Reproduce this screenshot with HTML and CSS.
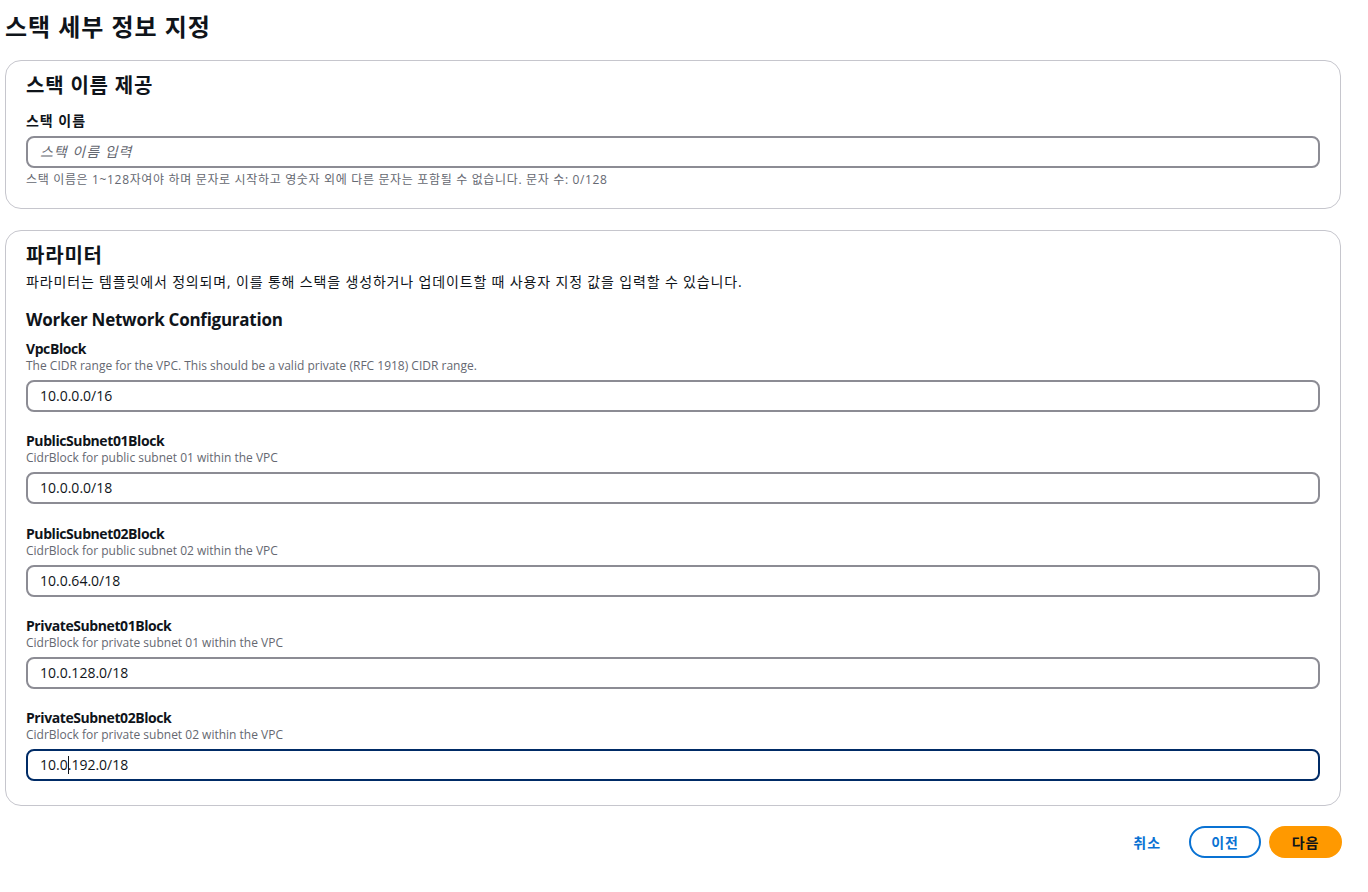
FILE: index.html
```html
<!DOCTYPE html>
<html lang="ko">
<head>
<meta charset="utf-8">
<title>스택 세부 정보 지정</title>
<link rel="stylesheet" href="styles.css">
</head>
<body>
<main class="page">
  <h1 class="page-title">스택 세부 정보 지정</h1>

  <section class="container">
    <h2 class="container-title">스택 이름 제공</h2>
    <div class="field">
      <label class="field-label ko">스택 이름</label>
      <div class="input empty">스택 이름 입력</div>
      <div class="field-hint">스택 이름은 1~128자여야 하며 문자로 시작하고 영숫자 외에 다른 문자는 포함될 수 없습니다. 문자 수: 0/128</div>
    </div>
  </section>

  <section class="container params">
    <h2 class="container-title">파라미터</h2>
    <p class="container-desc">파라미터는 템플릿에서 정의되며, 이를 통해 스택을 생성하거나 업데이트할 때 사용자 지정 값을 입력할 수 있습니다.</p>
    <h3 class="group-title">Worker Network Configuration</h3>

    <div class="param">
      <label class="field-label">VpcBlock</label>
      <div class="param-desc">The CIDR range for the VPC. This should be a valid private (RFC 1918) CIDR range.</div>
      <div class="input">10.0.0.0/16</div>
    </div>
    <div class="param">
      <label class="field-label">PublicSubnet01Block</label>
      <div class="param-desc">CidrBlock for public subnet 01 within the VPC</div>
      <div class="input">10.0.0.0/18</div>
    </div>
    <div class="param">
      <label class="field-label">PublicSubnet02Block</label>
      <div class="param-desc">CidrBlock for public subnet 02 within the VPC</div>
      <div class="input">10.0.64.0/18</div>
    </div>
    <div class="param">
      <label class="field-label">PrivateSubnet01Block</label>
      <div class="param-desc">CidrBlock for private subnet 01 within the VPC</div>
      <div class="input">10.0.128.0/18</div>
    </div>
    <div class="param">
      <label class="field-label">PrivateSubnet02Block</label>
      <div class="param-desc">CidrBlock for private subnet 02 within the VPC</div>
      <div class="input focused"><span class="caret-wrap">10.0<span class="caret"></span></span>.192.0/18</div>
    </div>
  </section>

  <div class="actions">
    <button class="btn-link">취소</button>
    <button class="btn-normal">이전</button>
    <button class="btn-primary">다음</button>
  </div>
</main>
</body>
</html>
```

FILE: styles.css
```css
* { box-sizing: border-box; }

html, body {
  margin: 0;
  padding: 0;
  background: #ffffff;
}

body {
  font-family: "Open Sans", "Noto Sans CJK KR", sans-serif;
  color: #0f141a;
  font-size: 14px;
  line-height: 20px;
}

.page {
  width: 1336px;
  margin-left: 5px;
  padding-top: 10px;
}

.page-title {
  margin: 0;
  font-size: 24px;
  line-height: 34px;
  font-weight: 700;
  letter-spacing: 0.04em;
}

.container {
  margin-top: 16px;
  border: 1px solid #c6c6cd;
  border-radius: 16px;
  padding: 12px 20px 20px 20px;
}

.container.params {
  margin-top: 21px;
  padding-bottom: 24px;
}

.container-title {
  margin: 0;
  font-size: 20px;
  line-height: 26px;
  font-weight: 700;
  letter-spacing: 0.04em;
}

.field {
  margin-top: 12px;
}

.field-label {
  display: block;
  font-size: 14px;
  line-height: 20px;
  font-weight: 700;
  letter-spacing: -0.03em;
}

.field-label.ko {
  letter-spacing: 0.07em;
}

.input {
  margin-top: 5px;
  height: 32px;
  border: 2px solid #8c8c94;
  border-radius: 8px;
  padding: 0 12px;
  font-size: 14px;
  line-height: 28px;
  color: #0f141a;
  white-space: nowrap;
}

.input.empty {
  color: #656871;
  font-style: italic;
  letter-spacing: 0.07em;
}

.input.focused {
  border-color: #002b66;
}

.caret-wrap {
  position: relative;
}

.caret {
  position: absolute;
  right: -1px;
  top: 1px;
  width: 1px;
  height: 18px;
  background: #0f141a;
}

.field-hint {
  margin-top: 4px;
  font-size: 12px;
  line-height: 16px;
  color: #656871;
  letter-spacing: 0.055em;
}

.container-desc {
  margin: 3px 0 0 0;
  font-size: 14px;
  line-height: 20px;
  letter-spacing: 0.06em;
}

.group-title {
  margin: 16px 0 0 0;
  font-size: 17px;
  line-height: 24px;
  font-weight: 700;
  letter-spacing: -0.015em;
}

.param {
  margin-top: 7px;
}

.param + .param {
  margin-top: 19.25px;
}

.param-desc {
  font-size: 12px;
  line-height: 16px;
  color: #656871;
  margin-top: -1px;
}

.param .input {
  margin-top: 6px;
}

.actions {
  display: flex;
  justify-content: flex-end;
  align-items: center;
  gap: 8px;
  margin-top: 20px;
  margin-right: -1px;
}

.actions button {
  font-family: "Open Sans", "Noto Sans CJK KR", sans-serif;
  font-size: 14px;
  font-weight: 700;
  height: 32px;
  border-radius: 20px;
  letter-spacing: 0.07em;
  cursor: pointer;
}

.btn-link {
  background: none;
  border: none;
  color: #0972d3;
  padding: 0 12px;
  margin-right: 8px;
  letter-spacing: 0.14em;
}

.btn-normal {
  background: #ffffff;
  border: 2px solid #0972d3;
  color: #0972d3;
  width: 72px;
}

.btn-primary {
  background: #ff9900;
  border: 2px solid #ff9900;
  color: #0f141a;
  width: 73px;
}
```
